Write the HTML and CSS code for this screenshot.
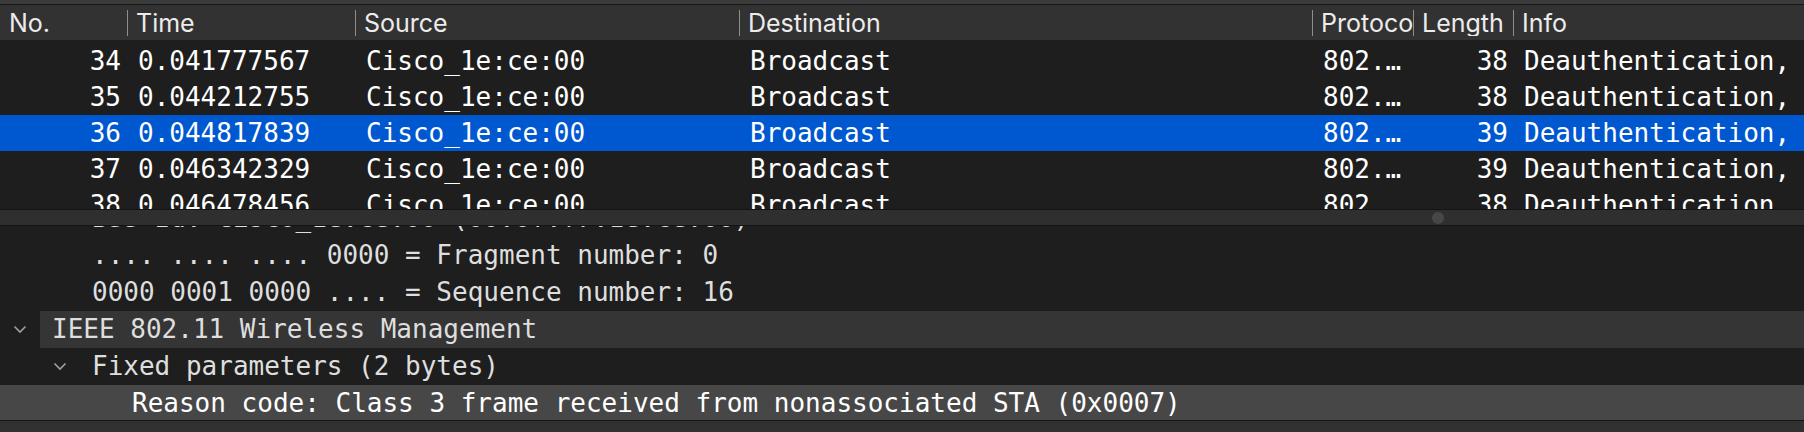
FILE: index.html
```html
<!DOCTYPE html>
<html>
<head>
<meta charset="utf-8">
<link rel="stylesheet" href="styles.css">
</head>
<body>
<div class="app">
  <div class="topband"></div>
  <div class="plist">
    <div class="phead cols">
      <div class="hcell first">No.</div>
      <div class="hcell">Time</div>
      <div class="hcell">Source</div>
      <div class="hcell">Destination</div>
      <div class="hcell">Protocol</div>
      <div class="hcell">Length</div>
      <div class="hcell">Info</div>
    </div>
    <div class="prows">
      <div class="prows-inner">
        <div class="prow cols"><span class="num">34</span><span class="c">0.041777567</span><span class="c">Cisco_1e:ce:00</span><span class="c">Broadcast</span><span class="c">802.…</span><span class="len">38</span><span class="c">Deauthentication, SN=16, FN=0, Flags=........</span></div>
        <div class="prow cols"><span class="num">35</span><span class="c">0.044212755</span><span class="c">Cisco_1e:ce:00</span><span class="c">Broadcast</span><span class="c">802.…</span><span class="len">38</span><span class="c">Deauthentication, SN=17, FN=0, Flags=........</span></div>
        <div class="prow cols selected"><span class="num">36</span><span class="c">0.044817839</span><span class="c">Cisco_1e:ce:00</span><span class="c">Broadcast</span><span class="c">802.…</span><span class="len">39</span><span class="c">Deauthentication, SN=16, FN=0, Flags=........</span></div>
        <div class="prow cols"><span class="num">37</span><span class="c">0.046342329</span><span class="c">Cisco_1e:ce:00</span><span class="c">Broadcast</span><span class="c">802.…</span><span class="len">39</span><span class="c">Deauthentication, SN=17, FN=0, Flags=........</span></div>
        <div class="prow cols"><span class="num">38</span><span class="c">0.046478456</span><span class="c">Cisco_1e:ce:00</span><span class="c">Broadcast</span><span class="c">802.…</span><span class="len">38</span><span class="c">Deauthentication, SN=18, FN=0, Flags=........</span></div>
      </div>
    </div>
    <div class="hscroll"><span class="thumb"></span></div>
  </div>
  <div class="detail">
    <div class="detail-inner">
      <div class="tline lvl1"><span class="branch"></span><span class="txt">BSS Id: Cisco_1e:ce:00 (00:0f:f7:1e:ce:00)</span></div>
      <div class="tline lvl1"><span class="branch"></span><span class="txt">.... .... .... 0000 = Fragment number: 0</span></div>
      <div class="tline lvl1"><span class="branch"></span><span class="txt">0000 0001 0000 .... = Sequence number: 16</span></div>
      <div class="tline lvl0 hover"><span class="branch"><svg width="14" height="9" viewBox="0 0 14 9"><polyline points="1.5,1.5 7,7 12.5,1.5" fill="none" stroke="#a0a0a0" stroke-width="1.6"/></svg></span><span class="txt">IEEE 802.11 Wireless Management</span></div>
      <div class="tline lvl1"><span class="branch"><svg width="14" height="9" viewBox="0 0 14 9"><polyline points="1.5,1.5 7,7 12.5,1.5" fill="none" stroke="#a0a0a0" stroke-width="1.6"/></svg></span><span class="txt">Fixed parameters (2 bytes)</span></div>
      <div class="tline lvl2 sel"><span class="branch"></span><span class="txt">Reason code: Class 3 frame received from nonassociated STA (0x0007)</span></div>
    </div>
  </div>
  <div class="bottom"></div>
</div>
</body>
</html>
```

FILE: styles.css
```css
html, body {
  margin: 0;
  padding: 0;
  background: #1e1e1e;
  overflow: hidden;
}

.app {
  width: 1804px;
  height: 432px;
  display: flex;
  flex-direction: column;
  background: #1e1e1e;
}

.topband {
  height: 4px;
  background: #3b3b3b;
  border-bottom: 1px solid #161616;
  flex: none;
}

.plist {
  flex: none;
  display: flex;
  flex-direction: column;
}

.cols {
  display: grid;
  grid-template-columns: 127px 228px 384px 573px 101px 100px 1fr;
}

.phead {
  height: 35px;
  background: #323232;
  align-items: center;
  font-family: Inter, "Noto Sans", sans-serif;
  font-size: 25px;
  color: #ececec;
}

.hcell {
  height: 26px;
  line-height: 26px;
  border-left: 1px solid #8e8e8e;
  padding-left: 8px;
  white-space: nowrap;
  overflow: hidden;
}

.hcell.first {
  border-left: none;
  padding-left: 9px;
}

.prows {
  height: 169px;
  overflow: hidden;
}

.prows-inner {
  padding-top: 3px;
}

.prow {
  height: 36px;
  align-items: center;
  font-family: "DejaVu Sans Mono", "Liberation Mono", monospace;
  font-size: 26px;
  color: #ffffff;
  white-space: nowrap;
}

.prow.selected {
  background: #0058d0;
}

.prow .c {
  padding-left: 11px;
  overflow: hidden;
}

.prow .num {
  text-align: right;
  padding-right: 6px;
}

.prow .len {
  text-align: right;
  padding-right: 5px;
}

.hscroll {
  height: 15px;
  background: #2f2f2f;
  border-top: 1px solid #141414;
  border-bottom: 1px solid #141414;
  display: flex;
  align-items: center;
  padding-left: 1432px;
}

.thumb {
  width: 12px;
  height: 12px;
  border-radius: 50%;
  background: #474747;
}

.detail {
  height: 194px;
  overflow: hidden;
  flex: none;
}

.detail-inner {
  margin-top: -26px;
}

.tline {
  height: 37px;
  display: flex;
  align-items: center;
  font-family: "DejaVu Sans Mono", "Liberation Mono", monospace;
  font-size: 26px;
  color: #dedede;
  white-space: nowrap;
}

.tline.lvl1 { padding-left: 40px; }
.tline.lvl2 { padding-left: 80px; }

.branch {
  width: 40px;
  height: 37px;
  flex: none;
  display: flex;
  align-items: center;
  justify-content: center;
}

.txt {
  padding-left: 12px;
  height: 37px;
  line-height: 37px;
  flex: 1;
}

.tline.hover .txt {
  background: #353535;
}

.tline.sel {
  background: #474747;
  color: #ffffff;
}

.bottom {
  flex: 1;
  background: #313131;
  border-top: 1px solid #141414;
}
```
